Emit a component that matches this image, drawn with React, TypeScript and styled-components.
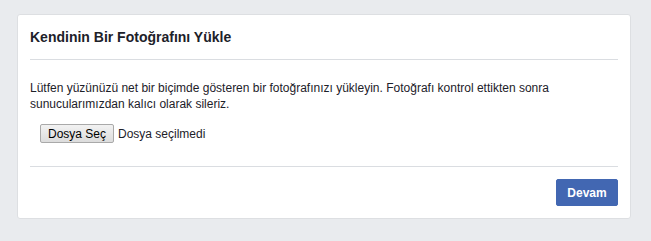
import React from "react";
import styled, { createGlobalStyle } from "styled-components";

const Global = createGlobalStyle`
  html, body {
    margin: 0;
    padding: 0;
    background: #e9ebee;
    font-family: "Liberation Sans", Arial, Helvetica, sans-serif;
    color: #1d2129;
  }
  * { box-sizing: border-box; }
`;

const Card = styled.div`
  margin: 14px 0 0 17px;
  width: 614px;
  background: #fff;
  border: 1px solid #dddfe2;
  border-radius: 3px;
`;

const Header = styled.div`
  margin: 0 12px;
  padding: 13px 0;
  border-bottom: 1px solid #dadde1;
`;

const Title = styled.h2`
  margin: 0;
  font-size: 14px;
  line-height: 18px;
  font-weight: bold;
  color: #1d2129;
`;

const Body = styled.div`
  margin: 0 12px;
  padding: 20px 0 23px;
  border-bottom: 1px solid #dadde1;
`;

const Text = styled.p`
  margin: 0;
  font-size: 12px;
  line-height: 16px;
  color: #1d2129;
`;

const FileRow = styled.div`
  display: flex;
  align-items: center;
  gap: 4px;
  margin-top: 12px;
  padding-left: 10px;
  font-size: 12px;
`;

const FileButton = styled.button`
  height: 19px;
  width: 74px;
  padding: 0;
  font-family: "Liberation Sans", Arial, sans-serif;
  font-size: 12px;
  color: #000;
  background: linear-gradient(#f2f2f2, #dcdcdc);
  border: 1px solid #a9a9a9;
  border-radius: 2px;
`;

const FileLabel = styled.span`
  color: #1d2129;
  font-size: 12px;
`;

const Footer = styled.div`
  margin: 0 12px;
  padding: 12px 0 12px;
  display: flex;
  justify-content: flex-end;
`;

const PrimaryButton = styled.button`
  height: 27px;
  width: 62px;
  padding: 0;
  font-family: "Liberation Sans", Arial, sans-serif;
  font-size: 12px;
  font-weight: bold;
  color: #fff;
  background: #4267b2;
  border: 1px solid #4267b2;
  border-radius: 2px;
`;

export default function App() {
  return (
    <>
      <Global />
      <Card>
        <Header>
          <Title>Kendinin Bir Fotoğrafını Yükle</Title>
        </Header>
        <Body>
          <Text>
            Lütfen yüzünüzü net bir biçimde gösteren bir fotoğrafınızı yükleyin. Fotoğrafı kontrol ettikten sonra
            sunucularımızdan kalıcı olarak sileriz.
          </Text>
          <FileRow>
            <FileButton>Dosya Seç</FileButton>
            <FileLabel>Dosya seçilmedi</FileLabel>
          </FileRow>
        </Body>
        <Footer>
          <PrimaryButton>Devam</PrimaryButton>
        </Footer>
      </Card>
    </>
  );
}
